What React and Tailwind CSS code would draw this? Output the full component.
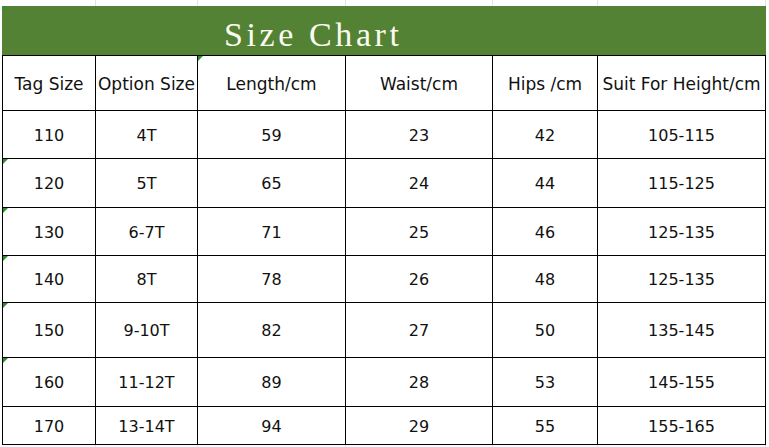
import React from "react";

const COLS = "grid grid-cols-[93px_102px_148px_147px_105px_168px]";

const headers = ["Tag Size", "Option Size", "Length/cm", "Waist/cm", "Hips /cm", "Suit For Height/cm"];

const rows = [
  { h: "h-[48px]", tri: false, d: ["110", "4T", "59", "23", "42", "105-115"] },
  { h: "h-[49px]", tri: true, d: ["120", "5T", "65", "24", "44", "115-125"] },
  { h: "h-[48px]", tri: true, d: ["130", "6-7T", "71", "25", "46", "125-135"] },
  { h: "h-[47px]", tri: true, d: ["140", "8T", "78", "26", "48", "125-135"] },
  { h: "h-[55px]", tri: true, d: ["150", "9-10T", "82", "27", "50", "135-145"] },
  { h: "h-[49px]", tri: true, d: ["160", "11-12T", "89", "28", "53", "145-155"] },
  { h: "h-[38px]", tri: false, d: ["170", "13-14T", "94", "29", "55", "155-165"] },
];

function Tri() {
  return (
    <span className="absolute left-0 top-0 w-0 h-0 border-t-[5px] border-t-[#2f8f2f] border-r-[5px] border-r-transparent" />
  );
}

export default function App() {
  return (
    <div className="w-[769px] h-[447px] bg-white overflow-hidden font-['DejaVu_Sans',sans-serif] text-[#111]">
      {/* faint spreadsheet gridlines above */}
      <div className={`${COLS} h-[6px] ml-[3px]`}>
        {headers.map((_, i) => (
          <div key={i} className="border-r border-[#e3e3e3]" />
        ))}
      </div>

      <div className="ml-[2px] w-[764px] relative">
        {/* title */}
        <div className="relative h-[50px] bg-[#548235] border-b border-black flex items-center pl-[222px] pt-[8px]">
          <Tri />
          <span className="font-['Liberation_Serif',serif] text-[34px] leading-none tracking-[3.6px] text-[#fbfbef]">
            Size Chart
          </span>
        </div>

        <div className="border-l border-black">
          {/* header row */}
          <div className={`${COLS} h-[55px]`}>
            {headers.map((t, i) => (
              <div
                key={i}
                className="relative border-r border-b border-black flex items-center justify-center pt-[4px] text-[17px] whitespace-nowrap"
              >
                {i === 2 && <Tri />}
                {t}
              </div>
            ))}
          </div>

          {rows.map((r, ri) => (
            <div key={ri} className={`${COLS} ${r.h}`}>
              {r.d.map((t, i) => (
                <div
                  key={i}
                  className="relative border-r border-b border-black flex items-center justify-center pt-[2px] text-[16px] whitespace-nowrap"
                >
                  {i === 0 && r.tri && <Tri />}
                  {t}
                </div>
              ))}
            </div>
          ))}
        </div>
      </div>

      {/* faint gridlines below */}
      <div className={`${COLS} h-[3px] ml-[3px]`}>
        {headers.map((_, i) => (
          <div key={i} className="border-r border-[#e3e3e3]" />
        ))}
      </div>
    </div>
  );
}
